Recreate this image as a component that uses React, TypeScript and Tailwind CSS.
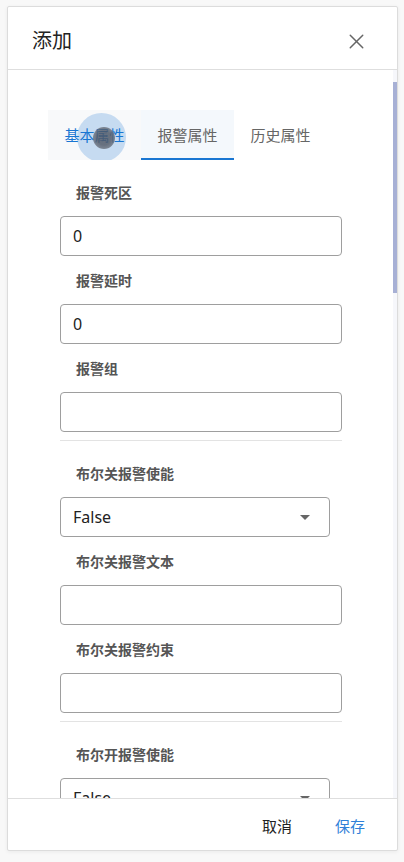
import { X } from "lucide-react";

const font = "font-['Noto_Sans','Noto_Sans_CJK_SC',sans-serif]";

function Label({ text }: { text: string }) {
  return (
    <div className="h-[48px] flex items-center pl-[16px] text-[14px] font-semibold text-[#555]">
      {text}
    </div>
  );
}

function TextInput({ value = "" }: { value?: string }) {
  return (
    <div className="w-[282px] h-[40px] border border-[#9e9e9e] rounded-[4px] px-[12px] flex items-center text-[16px] text-[#222]">
      {value}
    </div>
  );
}

function Select({ value }: { value: string }) {
  return (
    <div className="w-[270px] h-[40px] border border-[#9e9e9e] rounded-[4px] pl-[12px] pr-[19px] flex items-center justify-between text-[16px] text-[#222]">
      <span>{value}</span>
      <svg width="10" height="5" viewBox="0 0 10 5">
        <path d="M0 0 L10 0 L5 5 Z" fill="#666" />
      </svg>
    </div>
  );
}

function Divider() {
  return <div className="w-[282px] h-px bg-[#e3e3e3] my-[8px]" />;
}

export default function App() {
  return (
    <div className={`w-[404px] h-[862px] bg-[#f8f8f8] pt-[6px] pl-[7px] ${font}`}>
      <div className="w-[391px] h-[845px] bg-white border border-[#dcdcdc] rounded-[2px] shadow-[0_1px_4px_rgba(0,0,0,0.06)] flex flex-col overflow-hidden">
        <div className="h-[63px] shrink-0 border-b border-[#dedede] flex items-center justify-between pl-[24px] pr-[28px] pt-[6px]">
          <span className="text-[20px] text-[#222]">添加</span>
          <X size={25} strokeWidth={1.4} color="#666" />
        </div>

        <div className="relative flex-1 overflow-hidden">
          <div className="px-[40px] pt-[40px]">
            <div className="flex h-[50px]">
              <div className="relative w-[93px] h-[50px] bg-[#f8f9fa] overflow-hidden flex items-center justify-center text-[15px] text-[#1976d2]">
                <div className="absolute left-[29px] top-[3px] w-[49px] h-[49px] rounded-full bg-[#c6dbf1]" />
                <span className="relative">基本属性</span>
                <div className="absolute left-[45px] top-[17px] w-[22px] h-[22px] rounded-full bg-[radial-gradient(circle,#4f5663_45%,#8a919c_100%)] opacity-80" />
              </div>
              <div className="w-[93px] h-[50px] bg-[#f4f8fc] border-b-2 border-[#1976d2] flex items-center justify-center pt-[2px] text-[15px] text-[#666]">
                报警属性
              </div>
              <div className="w-[93px] h-[50px] flex items-center justify-center text-[15px] text-[#666]">
                历史属性
              </div>
            </div>
          </div>

          <div className="px-[52px] pt-[8px]">
            <Label text="报警死区" />
            <TextInput value="0" />
            <Label text="报警延时" />
            <TextInput value="0" />
            <Label text="报警组" />
            <TextInput />
            <Divider />
            <Label text="布尔关报警使能" />
            <Select value="False" />
            <Label text="布尔关报警文本" />
            <TextInput />
            <Label text="布尔关报警约束" />
            <TextInput />
            <Divider />
            <Label text="布尔开报警使能" />
            <Select value="False" />
          </div>

          <div className="absolute right-0 top-0 w-[4px] h-full bg-[#f6f7fb]" />
          <div className="absolute right-0 top-[12px] w-[4px] h-[211px] bg-[#a7b0d5]" />
        </div>

        <div className="h-[52px] shrink-0 border-t border-[#dedede] flex items-center justify-end pr-[24px] pt-[3px] gap-[27px]">
          <button className="px-[8px] h-[36px] text-[15px] text-[#222]">取消</button>
          <button className="px-[8px] h-[36px] text-[15px] text-[#2f80d8]">保存</button>
        </div>
      </div>
    </div>
  );
}
